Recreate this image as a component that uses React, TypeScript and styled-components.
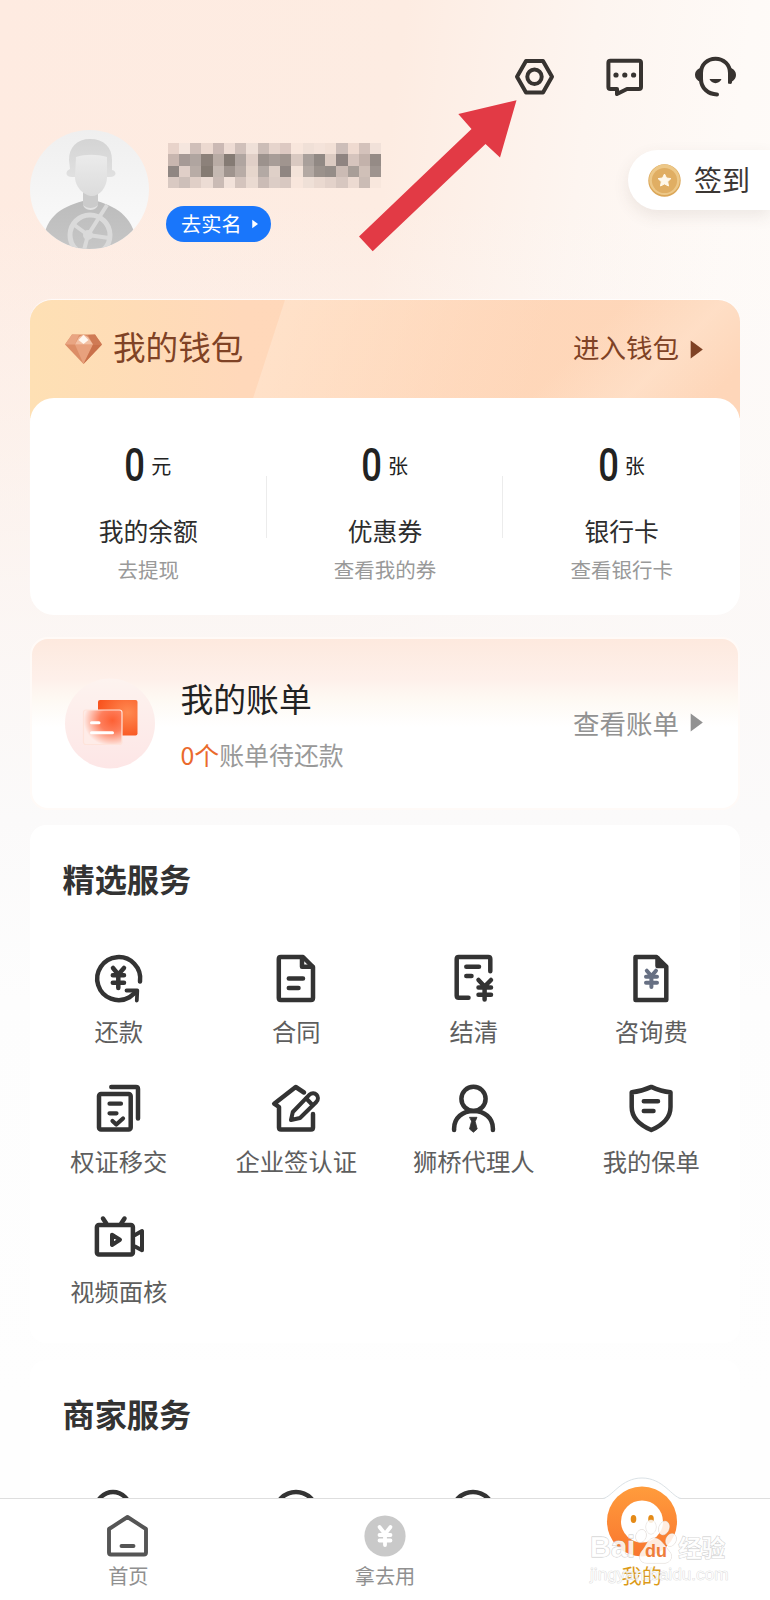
import React from 'react';
import styled, { createGlobalStyle } from 'styled-components';

const GlobalStyle = createGlobalStyle`
  *, *::before, *::after { box-sizing: border-box; }
  body {
    margin: 0;
    font-family: "Noto Sans CJK SC", "Noto Sans", sans-serif;
    color: #222;
    background: #fefefe;
  }
  svg { display: block; flex: none; overflow: visible; }
`;

const Page = styled.div`
  position: relative;
  width: 770px;
  height: 1600px;
  overflow: hidden;
  display: flex;
  flex-direction: column;
  background:
    linear-gradient(180deg, rgba(252, 250, 249, 0) 200px, rgba(251, 248, 247, 0.85) 620px, #fbfafa 820px, #fdfdfd 1000px, #fefefe 1400px),
    linear-gradient(97deg, #feebe1 0, #fdece2 42%, #fdf5f0 62%, #fefaf7 78%, #fefcfa 100%);
`;

const Content = styled.main`
  height: 1498px;
  overflow: hidden;
  display: flex;
  flex-direction: column;
  & > * { flex: none; }
`;

const Toolbar = styled.div`
  display: flex;
  justify-content: flex-end;
  align-items: flex-start;
  gap: 52px;
  padding: 56px 34px 0 0;
  height: 130px;
`;

const Profile = styled.section`
  display: flex;
  height: 170px;
  padding-left: 30px;
`;

const ProfileInfo = styled.div`
  flex: 1;
  padding: 13px 0 0 18.5px;
`;

const HiddenName = styled.div`
  display: grid;
  grid-template-columns: repeat(19, 11.25px);
  grid-auto-rows: 11.25px;
  margin-bottom: 18px;
`;

const NameCell = styled.span<{ $color: string }>`
  background: ${(p) => p.$color};
`;

const VerifyButton = styled.button`
  display: flex;
  align-items: center;
  gap: 10px;
  margin-left: -2px;
  width: 105px;
  height: 36px;
  padding: 0 0 0 15.5px;
  border: 0;
  border-radius: 18px;
  background: #1976fb;
  color: #fff;
  font: 400 20.2px/32px "Noto Sans CJK SC", sans-serif;
`;

const CheckIn = styled.div`
  display: flex;
  align-items: center;
  gap: 13px;
  width: 142px;
  height: 60px;
  margin-top: 20px;
  padding-left: 20px;
  border-radius: 30px 0 0 30px;
  background: #fff;
  box-shadow: 0 6px 16px rgba(90, 70, 60, 0.1);
  font-size: 28px;
  line-height: 56px;
  color: #3b3633;
`;

const CheckInLabel = styled.span`
  height: 58px;
`;

const Wallet = styled.section`
  width: 710px;
  height: 315px;
  margin-left: 30px;
  border-radius: 22px;
  box-shadow: 0 -1px 1px rgba(255, 255, 255, 0.8);
  background:
    linear-gradient(108deg, transparent 242px, rgba(255, 234, 215, 0.5) 243px, rgba(255, 225, 203, 0.2) 430px, transparent 500px) 0 0 / 100% 118px no-repeat,
    linear-gradient(135deg, transparent 72%, rgba(255, 229, 208, 0.55) 84%, transparent 94%) 0 0 / 100% 118px no-repeat,
    linear-gradient(90deg, #fee0b4 0, #ffd8ba 30%, #fed6b9 100%) 0 0 / 100% 118px no-repeat;
`;

const WalletHead = styled.header`
  display: flex;
  align-items: center;
  height: 98px;
  padding: 0 37px 0 35px;
  color: #7f4225;
`;

const WalletTitle = styled.h2`
  flex: 1;
  margin: -7px 0 0 11px;
  font-size: 32.6px;
  font-weight: 400;
  line-height: 44px;
`;

const MoreLink = styled.a<{ $muted?: boolean }>`
  display: flex;
  align-items: center;
  gap: 11px;
  font-size: 26.5px;
  line-height: 36px;
  color: ${(p) => (p.$muted ? '#929292' : '#7f4225')};
  & > span { margin-top: ${(p) => (p.$muted ? -1 : -5)}px; }
  & > svg { margin-top: ${(p) => (p.$muted ? -2 : 1)}px; }
`;

const Balances = styled.div`
  display: grid;
  grid-template-columns: repeat(3, 1fr);
  width: 710px;
  height: 217px;
  border-radius: 24px;
  background: #fff;
`;

const Balance = styled.div`
  display: flex;
  flex-direction: column;
  align-items: center;
  padding-top: 43px;
  background: linear-gradient(#ececec, #ececec) right 78px / 1px 62px no-repeat;
  &:last-child { background: none; }
`;

const Amount = styled.div`
  display: flex;
  align-items: center;
  justify-content: center;
  height: 50px;
  gap: 2px;
  margin-left: -5px;
`;

const Digit = styled.span`
  width: 29px;
  text-align: center;
  font: 500 45.5px/50px Roboto, sans-serif;
  transform: scaleX(0.8);
`;

const Unit = styled.span`
  font-size: 20px;
  line-height: 30px;
`;

const BalanceName = styled.div`
  margin-top: 22px;
  font-size: 24.8px;
  line-height: 34px;
  color: #2d2d2d;
`;

const BalanceHint = styled.div`
  margin-top: 7px;
  font-size: 20.5px;
  line-height: 30px;
  color: #999;
`;

const Bills = styled.section`
  display: flex;
  align-items: center;
  width: 710px;
  height: 173px;
  margin: 22px 0 0 30px;
  padding: 0 35px 0 33px;
  border: 2px solid #fffaf7;
  border-radius: 18px;
  background: linear-gradient(180deg, #fde9de 0, #fef0ea 40px, #fef9f3 60px, #fff 88px);
`;

const BillsText = styled.div`
  flex: 1;
  margin-left: 25.5px;
`;

const BillsTitle = styled.h2`
  margin: -1px 0 17px;
  font-size: 32.8px;
  font-weight: 400;
  line-height: 44px;
  color: #222;
`;

const BillsHint = styled.p`
  margin: 0;
  font-size: 24.9px;
  line-height: 34px;
  color: #999;
`;

const Count = styled.span`
  color: #ea6a2c;
`;

const ServiceCard = styled.section<{ $top: number; $height: number }>`
  width: 710px;
  height: ${(p) => p.$height}px;
  margin: ${(p) => p.$top}px 0 0 30px;
  border-radius: 16px;
  background: #fff;
`;

const ServiceTitle = styled.h2`
  margin: 0;
  padding: 31px 0 0 32.5px;
  font-size: 32.2px;
  font-weight: 700;
  line-height: 44px;
  color: #333;
`;

const ServiceGrid = styled.div`
  display: grid;
  grid-template-columns: repeat(4, 177.5px);
  grid-auto-rows: 130px;
  margin-top: 53px;
`;

const Service = styled.div`
  display: flex;
  flex-direction: column;
  align-items: center;
  gap: 9px;
  font-size: 24.3px;
  line-height: 34px;
  color: #5e5e5e;
  white-space: nowrap;
`;

const PartialRow = styled.svg`
  margin-top: 55px;
`;

const TabBar = styled.nav`
  position: relative;
  display: grid;
  grid-template-columns: repeat(3, 1fr);
  height: 102px;
  border-top: 1px solid #dedede;
  background: #fff;
`;

const Tab = styled.div<{ $active?: boolean }>`
  display: flex;
  flex-direction: column;
  align-items: center;
  padding-top: ${(p) => (p.$active ? 0 : 16)}px;
  font-size: 20.2px;
  line-height: 30px;
  color: ${(p) => (p.$active ? '#dc9a17' : '#909090')};
  & > span { margin-top: 4px; }
`;

const Mascot = styled.div`
  height: 58px;
  svg { margin-top: -22px; }
`;

const Pointer = styled.svg`
  position: absolute;
  left: 359px;
  top: 100px;
`;

const Watermark = styled.div`
  position: absolute;
  left: 590px;
  top: 1520px;
  width: 140px;
  color: rgba(255, 255, 255, 0.85);
  -webkit-text-stroke: 0.8px #c8c8c8;
  paint-order: stroke;
`;

const WatermarkBrand = styled.div`
  display: flex;
  align-items: flex-end;
  height: 44px;
  font: 700 29px/34px "Liberation Sans", sans-serif;
`;

const WatermarkCn = styled.span`
  margin-left: 1px;
  font: 700 23.5px/34px "Noto Sans CJK SC", sans-serif;
`;

const WatermarkUrl = styled.div`
  font: 400 17.2px/20px "Liberation Sans", sans-serif;
  color: rgba(255, 255, 255, 0.8);
  -webkit-text-stroke: 0.6px #d0d0d0;
`;

const MOSAIC = [
  'e8d3ca f5e6de d0bfb9 ecd9d0 cbb9b4 eedcd4 d0c0ba efe0d8 ccbdb7 e6d4cc ddc9c2 f8e6dc f0e0d7 f4e3da f2e0d6 cdbeb9 efdad0 d4c2bb f1e1d9',
  'c8b6af a69a96 b0a5a0 8c817a b9aca5 857b74 b0a5a0 e0cfc7 9c928d a89d98 a0958f d9c9c1 a9a09b 918984 dccbc2 8f8481 d6c4bd c3b2ab 958b86',
  '8f8682 e0cfc8 b8aca6 857b73 c5b9b2 9f948e b8aca6 e6d6cc b3a9a4 dfd0c8 8f8682 f3e3d9 b3a9a3 9b928c 958d88 cbbbb4 a89e98 d0c0b8 9e948f',
  'd9c9c2 cdbfb9 e0cfc7 ecdcd4 cabbb5 f2e2da d4c4bd eadad1 cbbcb6 dccdc6 d8c8c1 f8e6dc efe0d7 ead9d0 e3d2ca d7c7c0 ecdad1 cbbcb5 f8e7dd',
].flatMap((row) => row.split(' '));

const Caret = ({ w = 13, h = 19 }: { w?: number; h?: number }) => (
  <svg width={w} height={h} viewBox="0 0 12 18">
    <path d="M0.5 0.5 L12 9 L0.5 17.5 Z" fill="currentColor" />
  </svg>
);

const NutIcon = () => (
  <svg width="39" height="40" viewBox="0 0 39 40" fill="none" stroke="#373330" strokeWidth="4" strokeLinejoin="round">
    <path d="M11 5 H28 L37 20.7 L28 36.4 H11 L2 20.7 Z" />
    <circle cx="19.5" cy="20.7" r="7.2" />
  </svg>
);

const MessageIcon = () => (
  <svg width="37" height="40" viewBox="0 0 37 40" fill="none" stroke="#373330" strokeWidth="4" strokeLinejoin="round">
    <path d="M4.4 4.7 H33 Q35 4.7 35 6.7 V31 Q35 33 33 33 H21 L11 38 V33 H4.4 Q2.4 33 2.4 31 V6.7 Q2.4 4.7 4.4 4.7 Z" />
    <g fill="#373330" stroke="none">
      <circle cx="10" cy="19" r="2.6" />
      <circle cx="18.8" cy="19" r="2.6" />
      <circle cx="27.6" cy="19" r="2.6" />
    </g>
  </svg>
);

const HeadsetIcon = () => (
  <svg width="41" height="40" viewBox="0 0 41 40" fill="none" stroke="#373330" strokeWidth="4" strokeLinecap="round">
    <path d="M35 25 V17 C35 8.5 28.5 2.7 20.5 2.7 C12.5 2.7 6 8.5 6 17 V23 C6 32 13 38.3 22 38.5" />
    <path d="M33 13 L36 12 C39.5 13.5 41 16 41 19 C41 22 39.5 24 37 25.5 C37 28 36 28.5 33 27.5 Z" fill="#373330" stroke="none" />
    <path d="M5.5 12 C1.5 13.5 0 16 0 19 C0 22 2 24.5 5.5 26 Z" fill="#373330" stroke="none" />
    <path d="M14.5 23 H26.5 C24.5 28.5 16.5 28.5 14.5 23 Z" fill="#373330" stroke="none" />
  </svg>
);

const Avatar = () => (
  <svg width="119" height="119" viewBox="0 0 119 119">
    <defs>
      <linearGradient id="avatarBg" x1="0" y1="0" x2="0" y2="1">
        <stop offset="0" stopColor="#efefef" />
        <stop offset="1" stopColor="#fbfbfb" />
      </linearGradient>
      <linearGradient id="avatarHead" x1="0" y1="0" x2="0" y2="1">
        <stop offset="0" stopColor="#d4d4d4" />
        <stop offset="1" stopColor="#e0e0e0" />
      </linearGradient>
      <linearGradient id="avatarFace" x1="0" y1="0" x2="0" y2="1">
        <stop offset="0" stopColor="#ebebeb" />
        <stop offset="1" stopColor="#dcdcdc" />
      </linearGradient>
      <linearGradient id="avatarBody" x1="0" y1="0" x2="0" y2="1">
        <stop offset="0" stopColor="#bcbcbc" />
        <stop offset="1" stopColor="#c6c6c6" />
      </linearGradient>
      <clipPath id="avatarClip"><circle cx="59.5" cy="59.5" r="59.5" /></clipPath>
    </defs>
    <g clipPath="url(#avatarClip)">
      <rect width="119" height="119" fill="url(#avatarBg)" />
      <path d="M12 119 C14 87 29 78 53 71 H67 C89 78 104 87 108 119 Z" fill="url(#avatarBody)" />
      <path d="M53 58 H68 V75 C64 81 57 81 53 75 Z" fill="#cbcbcb" />
      <path d="M53 75 C57 79 64 79 68 75 L67 77 C64 81 57 81 54 77 Z" fill="#e2e2e2" />
      <path d="M39 30 C39 17 47 9 60 9 C74 9 82 17 82 30 V40 C87 41 87 47 80 47 H42 C35 47 35 41 40 39 Z" fill="url(#avatarHead)" />
      <path d="M46 27 C55 24 67 24 77 27 V47 C77 58 69 66 62 66 C55 66 45 58 45 47 Z" fill="url(#avatarFace)" />
      <g fill="none" stroke="#dadada">
        <circle cx="60" cy="105" r="20" strokeWidth="5" />
        <path d="M58 105 L77 75 M58 105 L79 108 M58 105 L43 94 M58 105 L53 124" strokeWidth="4" />
      </g>
      <circle cx="58" cy="105" r="5" fill="#dadada" />
    </g>
  </svg>
);

const CoinIcon = () => (
  <svg width="33" height="33" viewBox="0 0 33 33">
    <circle cx="16.5" cy="16.5" r="16.2" fill="#dba657" />
    <circle cx="16.5" cy="15.8" r="15.3" fill="#edc888" />
    <circle cx="16.5" cy="16.5" r="12.6" fill="#e0ae63" />
    <path d="M16.5 10 L18.5 14 L22.9 14.6 L19.7 17.7 L20.5 22 L16.5 19.9 L12.5 22 L13.3 17.7 L10.1 14.6 L14.5 14 Z" fill="#fff8ea" stroke="#fff8ea" strokeLinejoin="round" />
  </svg>
);

const DiamondIcon = () => (
  <svg width="37" height="30" viewBox="0 0 37 30">
    <path d="M7 0.5 H30 L37 10.5 L18.5 30 L0 10.5 Z" fill="#dc8d66" />
    <path d="M7 0.5 L0 10.5 H10 L14 1 Z" fill="#e9a582" />
    <path d="M30 0.5 L37 10.5 H28 L23 1 Z" fill="#cf7a54" />
    <path d="M10 10.5 H28 L18.5 30 Z" fill="#e8a17d" />
    <path d="M28 10.5 H37 L18.5 30 Z" fill="#c9704a" />
    <path d="M10 10.5 L14 3 L18.5 0.5 L23 3 L28 10.5 Z" fill="#f3c0a3" />
    <path d="M13.5 6 L18.5 1 L23.5 6 L18.5 10 Z" fill="#fff7f0" />
  </svg>
);

const BillIcon = () => (
  <svg width="90" height="90" viewBox="0 0 90 90">
    <defs>
      <radialGradient id="billBack" cx="0.75" cy="0.35" r="0.75">
        <stop offset="0" stopColor="#ff8a52" />
        <stop offset="1" stopColor="#f8541f" />
      </radialGradient>
      <linearGradient id="billDisc" x1="0" y1="0" x2="0" y2="1">
        <stop offset="0" stopColor="#fdf3ef" />
        <stop offset="1" stopColor="#fde6e6" />
      </linearGradient>
      <radialGradient id="billFront" cx="0.75" cy="0.3" r="0.75">
        <stop offset="0" stopColor="#fd6034" />
        <stop offset="0.45" stopColor="#fe7f5d" />
        <stop offset="1" stopColor="#feece8" />
      </radialGradient>
    </defs>
    <circle cx="45" cy="44.5" r="45" fill="url(#billDisc)" />
    <rect x="33" y="21" width="39.5" height="35.5" rx="2" fill="url(#billBack)" />
    <rect x="18.5" y="31" width="38.5" height="34.5" rx="2.5" fill="url(#billFront)" stroke="#fee3da" strokeWidth="1.2" />
    <path d="M26.5 43.7 H34 M26.5 53.7 H47.5" stroke="#fff" strokeWidth="3" strokeLinecap="round" />
  </svg>
);

const Glyph = styled.svg.attrs({ width: 52, height: 52, viewBox: '0 0 52 52' })`
  fill: none;
  stroke: #333;
  stroke-width: 4.5;
  stroke-linecap: round;
  stroke-linejoin: round;
`;

const SERVICES: { label: string; icon: React.ReactNode }[] = [
  {
    label: '还款',
    icon: (
      <Glyph>
        <path d="M47 28.5 A21.5 21.5 0 1 0 36.5 44.2 L43 39" />
        <path d="M33.5 37.5 L44.3 37.5 L43.8 47.5" strokeWidth="3.8" />
        <path d="M20 15 L25.3 21.5 L31 15 M25.3 21.5 V35 M19.8 22.3 H31 M19.8 29.7 H31" />
      </Glyph>
    ),
  },
  {
    label: '合同',
    icon: (
      <Glyph>
        <path d="M10.8 4 H33 L43 14 V45 Q43 47 41 47 H10.8 Q8.8 47 8.8 45 V6 Q8.8 4 10.8 4 Z" />
        <path d="M32 4.5 V13.8 H42.5" />
        <path d="M18.8 25.5 H33 M18.8 35 H28.5" />
      </Glyph>
    ),
  },
  {
    label: '结清',
    icon: (
      <Glyph>
        <path d="M42.3 18.3 V6 Q42.3 4 40.3 4 H10.7 Q8.7 4 8.7 6 V42.7 Q8.7 44.7 10.7 44.7 H20.5" />
        <path d="M18.3 13.7 H31 M18.3 23 H23.5" />
        <path d="M30.5 27 L36.6 33.5 L43 27 M36.6 34 V46.5 M30.5 34.5 H43 M30.5 41.7 H43" />
      </Glyph>
    ),
  },
  {
    label: '咨询费',
    icon: (
      <Glyph>
        <path d="M10.5 4 H31.5 L41.3 13.5 V47 H10.5 Z" />
        <path d="M32.5 5 V13 H40" fill="#333" />
        <path d="M21.8 17.7 L26.4 23 L31 17.7 M26.4 23 V34 M21 23.7 H32 M21 29.7 H32" stroke="#677083" strokeWidth="4" />
      </Glyph>
    ),
  },
  {
    label: '权证移交',
    icon: (
      <Glyph>
        <rect x="6" y="11" width="31.7" height="35.6" rx="2" />
        <path d="M18.3 4 H43 Q45 4 45 6 V35.5" />
        <path d="M16.5 20.7 H28 M16.5 30.3 H23.5 M19.5 38 L23.3 41.5 L30 35.5" strokeWidth="4.2" />
      </Glyph>
    ),
  },
  {
    label: '企业签认证',
    icon: (
      <Glyph>
        <path d="M34 9.5 L25.7 4 L4.2 20.7 L9 24 V44.6 Q9 46.6 11 46.6 H41 Q43 46.6 43 44.6 V31" />
        <path d="M21 37 L22.8 29 L39.3 11.8 C44.5 7.5 51 13.5 46.3 19 L30 35 Z" strokeWidth="4" />
        <path d="M36.3 15.5 L42.5 22" strokeWidth="4" />
      </Glyph>
    ),
  },
  {
    label: '狮桥代理人',
    icon: (
      <Glyph>
        <circle cx="25.5" cy="15.8" r="12.1" />
        <path d="M6.1 47 V45.5 C6.1 35 14.5 28 25.5 28 S44.9 35 44.9 45.5 V47" />
        <path d="M21.8 34.3 H29 L27.2 38.5 L29.2 46 L25.4 49.3 L21.5 46 L23.5 38.5 Z" fill="#333" strokeWidth="0.8" />
      </Glyph>
    ),
  },
  {
    label: '我的保单',
    icon: (
      <Glyph>
        <path d="M26.3 3.9 Q36 8.5 45.5 9.3 V24 C45.5 35 38 42 26.3 47 C14.5 42 6.7 35 6.7 24 V9.3 Q16.5 8.5 26.3 3.9 Z" />
        <path d="M18.8 18.3 H33 M18.8 28 H28.5" />
      </Glyph>
    ),
  },
  {
    label: '视频面核',
    icon: (
      <Glyph>
        <rect x="3.9" y="12" width="36" height="29.5" rx="2" />
        <path d="M10 5.5 L13.3 10.5 M31.5 5.5 L28.2 10.5" />
        <path d="M42 22 L49 18 V37.3 L42 33.5 M19 21.8 L27 26.8 L19 32 Z" strokeWidth="4" />
      </Glyph>
    ),
  },
];

const BALANCES = [
  { unit: '元', name: '我的余额', hint: '去提现' },
  { unit: '张', name: '优惠券', hint: '查看我的券' },
  { unit: '张', name: '银行卡', hint: '查看银行卡' },
];

const HomeIcon = () => (
  <svg width="42" height="42" viewBox="0 0 42 42" fill="none" stroke="#555" strokeWidth="3.9" strokeLinecap="round" strokeLinejoin="round">
    <path d="M20.5 2 L39 14 V37.5 Q39 39.5 37 39.5 H4 Q2 39.5 2 37.5 V14 Z" />
    <path d="M14.5 31 H26.5" />
  </svg>
);

const YuanIcon = () => (
  <svg width="42" height="42" viewBox="0 0 42 42">
    <circle cx="21" cy="21" r="20.6" fill="#c9c9c9" />
    <path d="M15.5 12 L21 19 L26.5 12 M21 19 V30 M15.5 20 H26.5 M15.5 25.5 H26.5" fill="none" stroke="#fff" strokeWidth="3.8" strokeLinecap="round" />
  </svg>
);

const MascotIcon = () => (
  <svg width="78" height="80" viewBox="0 0 78 80">
    <defs>
      <linearGradient id="mascotRing" x1="0" y1="0" x2="0" y2="1">
        <stop offset="0" stopColor="#ff9c3c" />
        <stop offset="1" stopColor="#f9762f" />
      </linearGradient>
    </defs>
    <path d="M0 22 C10 20 18 1 39 1 S68 20 78 22 V26 H0 Z" fill="#fff" />
    <path d="M0 21.5 C9 20 18 1 39 1 S69 20 78 21.5" fill="none" stroke="#dbe2e6" />
    <circle cx="39" cy="44.5" r="35" fill="url(#mascotRing)" />
    <circle cx="39" cy="44.5" r="21" fill="#fff" />
    <ellipse cx="30.5" cy="42" rx="2.8" ry="4" fill="#e48a17" />
    <ellipse cx="48" cy="42" rx="2.8" ry="4" fill="#e48a17" />
  </svg>
);

const PawIcon = () => (
  <svg width="42" height="44" viewBox="0 0 42 44">
    <g fill="#fff" fillOpacity="0.85" stroke="#d8d0ca" strokeWidth="0.8">
      <ellipse cx="6" cy="16" rx="5" ry="6.5" transform="rotate(20 6 16)" />
      <ellipse cx="16" cy="7" rx="5" ry="7" />
      <ellipse cx="29" cy="8" rx="5" ry="7" transform="rotate(20 29 8)" />
      <ellipse cx="36" cy="20" rx="5" ry="6.5" transform="rotate(25 36 20)" />
      <path d="M19 18 C26 18 30 27 35 32 C39 38 34 44 28 43 H12 C4 43 3 36 7 31 C11 27 13 18 19 18 Z" />
    </g>
    <text x="10" y="37" fontSize="18" fontWeight="700" fontFamily="Liberation Sans" fill="#ee7d3a" stroke="none">du</text>
  </svg>
);

const PARTIAL_ICONS = [
  { cx: 83, r: 17 },
  { cx: 266, r: 21 },
  { cx: 443, r: 21 },
];

export default function App() {
  return (
    <Page>
      <GlobalStyle />
      <Content>
        <Toolbar>
          <NutIcon />
          <MessageIcon />
          <HeadsetIcon />
        </Toolbar>
        <Profile>
          <Avatar />
          <ProfileInfo>
            <HiddenName>
              {MOSAIC.map((color, i) => (
                <NameCell key={i} $color={`#${color}`} />
              ))}
            </HiddenName>
            <VerifyButton>
              去实名
              <Caret w={6} h={10} />
            </VerifyButton>
          </ProfileInfo>
          <CheckIn>
            <CoinIcon />
            <CheckInLabel>签到</CheckInLabel>
          </CheckIn>
        </Profile>

        <Wallet>
          <WalletHead>
            <DiamondIcon />
            <WalletTitle>我的钱包</WalletTitle>
            <MoreLink>
              <span>进入钱包</span>
              <Caret />
            </MoreLink>
          </WalletHead>
          <Balances>
            {BALANCES.map((b) => (
              <Balance key={b.name}>
                <Amount>
                  <Digit>0</Digit>
                  <Unit>{b.unit}</Unit>
                </Amount>
                <BalanceName>{b.name}</BalanceName>
                <BalanceHint>{b.hint}</BalanceHint>
              </Balance>
            ))}
          </Balances>
        </Wallet>

        <Bills>
          <BillIcon />
          <BillsText>
            <BillsTitle>我的账单</BillsTitle>
            <BillsHint>
              <Count>0个</Count>账单待还款
            </BillsHint>
          </BillsText>
          <MoreLink $muted>
            <span>查看账单</span>
            <Caret />
          </MoreLink>
        </Bills>

        <ServiceCard $top={15} $height={518}>
          <ServiceTitle>精选服务</ServiceTitle>
          <ServiceGrid>
            {SERVICES.map((s) => (
              <Service key={s.label}>
                {s.icon}
                {s.label}
              </Service>
            ))}
          </ServiceGrid>
        </ServiceCard>

        <ServiceCard $top={17} $height={180}>
          <ServiceTitle>商家服务</ServiceTitle>
          <PartialRow width="710" height="60" viewBox="0 0 710 60">
            {PARTIAL_ICONS.map((c) => (
              <circle key={c.cx} cx={c.cx} cy={c.r + 2} r={c.r} fill="none" stroke="#333" strokeWidth="4.4" />
            ))}
          </PartialRow>
        </ServiceCard>
      </Content>

      <TabBar>
        <Tab>
          <HomeIcon />
          <span>首页</span>
        </Tab>
        <Tab>
          <YuanIcon />
          <span>拿去用</span>
        </Tab>
        <Tab $active>
          <Mascot>
            <MascotIcon />
          </Mascot>
          <span>我的</span>
        </Tab>
      </TabBar>

      <Pointer width="158" height="152" viewBox="0 0 158 152">
        <path d="M157.5 0.3 L141 57.5 L126.5 44 L13.7 151.3 L0 136.5 L112.5 29 L99.3 14 Z" fill="#e23a45" />
      </Pointer>

      <Watermark>
        <WatermarkBrand>
          Bai
          <PawIcon />
          <WatermarkCn>经验</WatermarkCn>
        </WatermarkBrand>
        <WatermarkUrl>jingyan.baidu.com</WatermarkUrl>
      </Watermark>
    </Page>
  );
}
